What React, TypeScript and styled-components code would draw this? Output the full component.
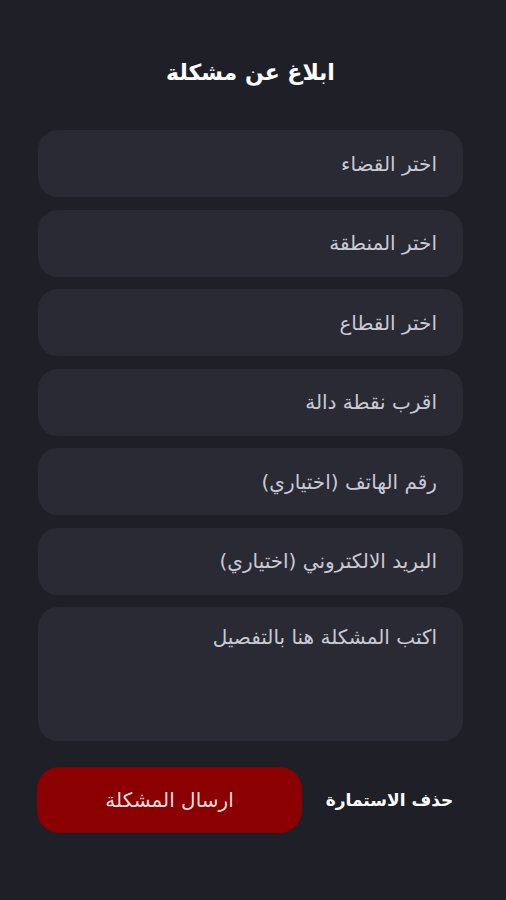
import React from 'react'
import styled, { createGlobalStyle } from 'styled-components'

const GlobalStyle = createGlobalStyle`
    html, body {
        margin: 0;
        padding: 0;
        background-color: #1e1f27;
    }

    * {
        box-sizing: border-box;
    }
`

const StyledPage = styled.div`
    direction: rtl;
    min-height: 900px;
    background-color: #1e1f27;
    padding: 56px 43px 0 38px;
    display: flex;
    flex-direction: column;
    font-family: 'DejaVu Sans', 'Noto Sans', sans-serif;
`

const StyledTitle = styled.h1`
    margin: 0 0 40px;
    text-align: center;
    color: #ffffff;
    font-size: 22px;
    font-weight: 700;
    line-height: 34px;
`

const StyledForm = styled.form`
    display: flex;
    flex-direction: column;
    row-gap: 12.5px;
`

const StyledField = styled.div<{ $tall?: boolean }>`
    height: ${({ $tall }) => ($tall ? '134px' : '67px')};
    border-radius: 20px;
    background-color: #2a2a35;
    display: flex;
    align-items: ${({ $tall }) => ($tall ? 'flex-start' : 'center')};
    padding: ${({ $tall }) => ($tall ? '16px 26px 0' : '0 26px')};
    color: #c9c9d3;
    font-size: 20px;
    line-height: 28px;
`

const StyledActions = styled.div`
    display: flex;
    align-items: center;
    margin-top: 26px;
`

const StyledDelete = styled.button`
    flex-grow: 1;
    background: none;
    border: none;
    color: #ffffff;
    font-family: inherit;
    font-size: 17px;
    font-weight: 700;
    text-align: center;
    padding: 0 0 0 14px;
`

const StyledSubmit = styled.button`
    width: 265px;
    height: 66px;
    border: none;
    border-radius: 22px;
    background-color: #8b0000;
    color: #e9dede;
    font-family: inherit;
    font-size: 20px;
    margin-left: -1px;
`

const fields = [
    'اختر القضاء',
    'اختر المنطقة',
    'اختر القطاع',
    'اقرب نقطة دالة',
    'رقم الهاتف (اختياري)',
    'البريد الالكتروني (اختياري)',
]

export default function App() {
    return (
        <>
            <GlobalStyle />
            <StyledPage>
                <StyledTitle>ابلاغ عن مشكلة</StyledTitle>
                <StyledForm>
                    {fields.map((text, index) => (
                        <StyledField key={index}>{text}</StyledField>
                    ))}
                    <StyledField $tall>اكتب المشكلة هنا بالتفصيل</StyledField>
                </StyledForm>
                <StyledActions>
                    <StyledDelete type="button">حذف الاستمارة</StyledDelete>
                    <StyledSubmit type="button">ارسال المشكلة</StyledSubmit>
                </StyledActions>
            </StyledPage>
        </>
    )
}
